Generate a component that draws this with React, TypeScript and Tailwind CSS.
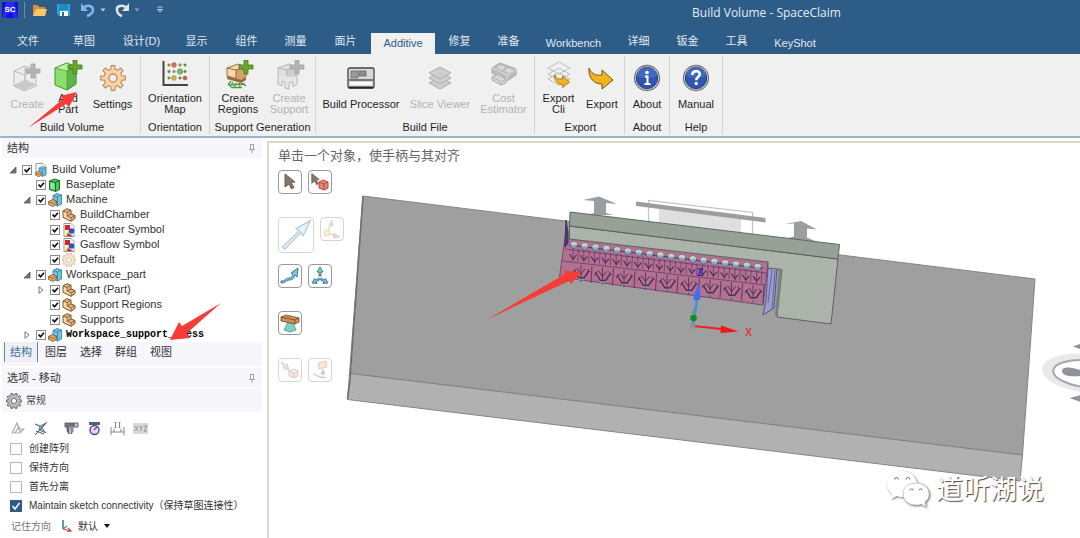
import React, { useState } from 'react';
import clsx from 'clsx';

/* ---------- shared shapes ---------- */

const Plus = ({ x, y, muted }: { x: number; y: number; muted?: boolean }) => (
  <path
    transform={`translate(${x} ${y})`}
    d="M5 0h4v5h5v4H9v5H5V9H0V5h5z"
    fill={muted ? '#b4b4b4' : '#69a82f'}
    stroke={muted ? '#a3a3a3' : '#3f7a1c'}
    strokeWidth="0.8"
  />
);

const GoldArrow = ({ transform }: { transform?: string }) => (
  <path
    transform={transform}
    d="M1 1c2 5 6 8 13 7V3l11 10-11 9v-5C6 17 0 11 1 1z"
    fill="#f0b41c"
    stroke="#7a5210"
    strokeWidth="1"
    strokeLinejoin="round"
  />
);

/* ---------- ribbon icons, 32 x 32 ---------- */

const CreateIcon = () => (
  <>
    <path d="M3 11l11-5 11 4v16l-12 5-10-5z" fill="#ededed" stroke="#b9b9b9" />
    <path d="M3 11l11 4 11-5M14 15v15M14 6v14M3 26l11-6 11 5" fill="none" stroke="#bdbdbd" />
    <path d="M4 26l10-5 10 4-11 5z" fill="#c9c9c9" />
    <Plus x={15} y={4} muted />
  </>
);

const AddPartIcon = () => (
  <>
    <path d="M3 8l12-5 9 4v17l-9 6-12-5z" fill="#8ede6c" stroke="#4a8f37" />
    <path d="M3 8l12-5 9 4-9 4z" fill="#b9f3a0" stroke="#4a8f37" strokeWidth="0.7" />
    <path d="M15 11l9-4v17l-9 6z" fill="#5eb545" stroke="#4a8f37" strokeWidth="0.7" />
    <Plus x={16} y={0} />
  </>
);

const gearPath = (teeth: number, outer: number, inner: number) => {
  const step = (Math.PI * 2) / teeth;
  const pts: string[] = [];
  for (let i = 0; i < teeth; i++) {
    const a = i * step;
    [[-0.3, inner], [-0.19, outer], [0.19, outer], [0.3, inner]].forEach(([o, r]) => {
      pts.push(`${(16 + Math.cos(a + o * step) * r).toFixed(2)} ${(16 + Math.sin(a + o * step) * r).toFixed(2)}`);
    });
  }
  return `M${pts.join('L')}Z`;
};

const SettingsIcon = () => (
  <g transform="translate(0 2)">
    <path d={gearPath(8, 12.5, 9)} fill="#fbd2a4" stroke="#b98a5c" strokeWidth="1.1" strokeLinejoin="round" />
    <circle cx="16" cy="16" r="4" fill="#f0f0f0" stroke="#b98a5c" strokeWidth="1.3" />
  </g>
);

const dots: [number, number, number, string][] = [
  [10, 5, 1.3, '#8a9a3a'], [15, 5, 2.4, '#e06a50'], [21, 5, 1.3, '#a8954a'], [26, 5, 1.3, '#4f9a3d'],
  [10, 11.5, 1.3, '#4f9a3d'], [15, 11.5, 1.3, '#a8954a'], [21, 11.5, 2.8, '#77bd5a'], [26, 11.5, 1.3, '#4f9a3d'],
  [10, 18, 1.3, '#8a9a3a'], [15, 18, 2.4, '#d9b24c'], [21, 18, 1.3, '#4f9a3d'], [26, 18, 2.1, '#d95845'],
];

const OrientationIcon = () => (
  <>
    <path d="M4.500 1v24H29" fill="none" stroke="#444" strokeWidth="2" />
    {dots.map(([cx, cy, r, fill]) => (
      <circle key={`${cx}-${cy}`} cx={cx} cy={cy} r={r} fill={fill} stroke="#6b6b4a" strokeWidth="0.4" />
    ))}
  </>
);

const RegionsIcon = ({ muted }: { muted?: boolean }) => (
  <>
    <path d="M5 8l11-4 8 3v10l-5 3-14-4z" fill={muted ? '#dedede' : '#f6d7af'} stroke={muted ? '#b3b3b3' : '#8b6234'} strokeWidth="0.9" />
    <path d="M14 10l10-3v10l-5 3-5-2z" fill={muted ? '#cdcdcd' : '#d3a36b'} />
    <path d="M5 8l9 2 10-3M14 10v8" fill="none" stroke={muted ? '#b3b3b3' : '#8b6234'} strokeWidth="0.9" />
    {muted ? (
      <path d="M5 16v8l4 2v-5l3 1v6l4 1v-6l4-1v5l4-3v-7" fill="#e6e6e6" stroke="#b3b3b3" strokeWidth="0.9" />
    ) : (
      <>
        <path d="M5 16l14 4 5-3v3l-5 3-14-4z" fill="#9b693a" />
        <path d="M9 21l-3 4m5-3l-3 5m6-4l-2 5m5-5l1 5m2-5l4 3M6 25l17-1M9 27.500h11" stroke="#4a9a43" strokeWidth="1.300" />
      </>
    )}
    <Plus x={17} y={0} muted={muted} />
  </>
);

const ProcessorIcon = () => (
  <>
    <rect x="3" y="8" width="26" height="20" rx="1.500" fill="#d8d8d8" stroke="#444" strokeWidth="1.300" />
    <rect x="6" y="11" width="7" height="7" fill="#9a9a9a" stroke="#666" strokeWidth="0.7" />
    <rect x="14" y="11" width="7" height="5" fill="#8a8a8a" stroke="#666" strokeWidth="0.7" />
    <path d="M4 20h24" stroke="#333" strokeWidth="1.200" />
    <path d="M5 22h22v3H5z" fill="#f8f8f8" />
    <path d="M4 27.500h24" stroke="#222" strokeWidth="2" />
  </>
);

const SliceIcon = () => (
  <>
    {[23, 18, 13].map((y) => (
      <path key={y} d={`M5 ${y}l11 6 11-6-11-6z`} fill="#cfcfcf" stroke="#ababab" />
    ))}
  </>
);

const CostIcon = () => (
  <>
    <path d="M4 8l8-5 16 6v6l-9 6-15-8z" fill="#bdbdbd" stroke="#a8a8a8" />
    <path d="M4 8l15 7 9-6M19 15v6" fill="none" stroke="#dcdcdc" />
    <path d="M4 17l6-3 8 5v4l-5 2-9-5z" fill="#d6d6d6" stroke="#aaa" />
    <path d="M4 17l9 5 5-3M13 22v3" fill="none" stroke="#aaa" strokeWidth="0.8" />
    <ellipse cx="13" cy="7.500" rx="3.500" ry="2" fill="#d9d9d9" />
    <ellipse cx="21" cy="10.500" rx="3.500" ry="2" fill="#d9d9d9" />
  </>
);

const ExportCliIcon = () => (
  <>
    {[19, 14, 8].map((y) => (
      <path key={y} d={`M5 ${y}l11 6 11-6-11-6z`} fill="none" stroke="#a9b5a0" strokeDasharray="2 0.7" />
    ))}
    <GoldArrow transform="translate(11 14) scale(.62)" />
  </>
);

const ExportIcon = () => <GoldArrow transform="translate(2 7)" />;

const RoundIcon = ({ children }: { children: React.ReactNode }) => (
  <g transform="translate(0 2)">
    <circle cx="16" cy="16" r="12.500" fill="#d9d9d9" stroke="#777" strokeWidth="1.300" />
    <circle cx="16" cy="16" r="10.700" fill="#2f55b0" stroke="#213d86" />
    <path d="M6 14a10 9 0 0 1 20 0c-6 3-14 3-20 0z" fill="#5075c9" opacity="0.6" />
    {children}
  </g>
);

const AboutIcon = () => (
  <RoundIcon>
    <circle cx="16" cy="10.500" r="1.800" fill="#fff" />
    <path d="M14 14.500h2.500V22M13.500 22h6" fill="none" stroke="#fff" strokeWidth="2" />
  </RoundIcon>
);

const ManualIcon = () => (
  <RoundIcon>
    <path d="M12.300 13c0-5 7.500-5 7.500-1 0 3-3.600 2.800-3.600 6.200" fill="none" stroke="#fff" strokeWidth="2.600" />
    <circle cx="16.200" cy="21.500" r="1.700" fill="#fff" />
  </RoundIcon>
);

/* ---------- ribbon ---------- */

type Tool = { lines: string[]; icon: React.ReactNode; width: string; muted?: boolean };
type Group = { title: string; box: string; tools: Tool[] };

const groups: Group[] = [
  {
    title: 'Build Volume',
    box: 'w-[141px] pl-1.5 pr-0.5',
    tools: [
      { lines: ['Create'], icon: <CreateIcon />, width: 'w-[42px]', muted: true },
      { lines: ['Add', 'Part'], icon: <AddPartIcon />, width: 'w-[40px]' },
      { lines: ['Settings'], icon: <SettingsIcon />, width: 'w-[49px]' },
    ],
  },
  {
    title: 'Orientation',
    box: 'w-[69px]',
    tools: [{ lines: ['Orientation', 'Map'], icon: <OrientationIcon />, width: 'w-full' }],
  },
  {
    title: 'Support Generation',
    box: 'w-[106px]',
    tools: [
      { lines: ['Create', 'Regions'], icon: <RegionsIcon />, width: 'w-[56px]' },
      { lines: ['Create', 'Support'], icon: <RegionsIcon muted />, width: 'w-[46px]', muted: true },
    ],
  },
  {
    title: 'Build File',
    box: 'w-[219px] px-1.5',
    tools: [
      { lines: ['Build Processor'], icon: <ProcessorIcon />, width: 'w-[78px]' },
      { lines: ['Slice Viewer'], icon: <SliceIcon />, width: 'w-[80px]', muted: true },
      { lines: ['Cost', 'Estimator'], icon: <CostIcon />, width: 'w-[47px]', muted: true },
    ],
  },
  {
    title: 'Export',
    box: 'w-[90px] pl-0.5',
    tools: [
      { lines: ['Export', 'Cli'], icon: <ExportCliIcon />, width: 'w-[43px]' },
      { lines: ['Export'], icon: <ExportIcon />, width: 'w-[44px]' },
    ],
  },
  { title: 'About', box: 'w-[45px]', tools: [{ lines: ['About'], icon: <AboutIcon />, width: 'w-full' }] },
  { title: 'Help', box: 'w-[53px]', tools: [{ lines: ['Manual'], icon: <ManualIcon />, width: 'w-full' }] },
];

const Ribbon = () => (
  <div className="flex border-b-2 border-[#9cb3ca] bg-[#f0f0f0] py-0.5">
    {groups.map((group) => (
      <section key={group.title} className={clsx('flex shrink-0 flex-col border-r border-[#d2d2d2]', group.box)}>
        <div className="flex">
          {group.tools.map((tool) => (
            <button
              key={tool.lines.join(' ')}
              disabled={tool.muted}
              className={clsx('flex shrink-0 flex-col items-center pt-1', tool.width, tool.muted ? 'text-[#b3b3b3]' : 'text-[#1f1f1f]')}
            >
              <svg viewBox="0 0 32 32" className="size-8 shrink-0">
                {tool.icon}
              </svg>
              <span className="flex h-6 flex-col justify-center leading-[11px] whitespace-nowrap">
                {tool.lines.map((line) => (
                  <span key={line}>{line}</span>
                ))}
              </span>
            </button>
          ))}
        </div>
        <h2 className="mt-1 text-center leading-[14px] whitespace-nowrap text-[#1f1f1f]">{group.title}</h2>
      </section>
    ))}
  </div>
);

/* ---------- title bar and tabs ---------- */

const tabs: [string, string][] = [
  ['文件', 'w-[56px]'],
  ['草图', 'w-[56px]'],
  ['设计(D)', 'w-[59px]'],
  ['显示', 'w-[51px]'],
  ['组件', 'w-[49px]'],
  ['测量', 'w-[49px]'],
  ['面片', 'w-[51px]'],
  ['Additive', 'w-[64px]'],
  ['修复', 'w-[49px]'],
  ['准备', 'w-[49px]'],
  ['Workbench', 'w-[81px]'],
  ['详细', 'w-[49px]'],
  ['钣金', 'w-[49px]'],
  ['工具', 'w-[49px]'],
  ['KeyShot', 'w-[68px]'],
];

const Caret = () => (
  <svg viewBox="0 0 6 4" className="h-1 w-1.5">
    <path d="M0.500 0.500h5L3 3.500z" fill="#c3d2e0" />
  </svg>
);

const TitleBar = () => (
  <div className="flex h-[30px] items-start">
    <div className="flex h-5 items-center">
      <svg viewBox="0 0 16 16" className="ml-0.5 size-4">
        <path d="M0 0h16v16H0z" fill="#1212d6" />
        <path d="M0 16L4 0h8l4 16h-4l-2-5H6l-2 5z" fill="#2b2bf0" />
        <text x="8" y="10" textAnchor="middle" fontSize="8" fontWeight="bold" fill="#fff">SC</text>
      </svg>
      <span className="ml-1.5 h-4 w-px bg-[#6b8cab]" />
      <button aria-label="Open" className="ml-[7px]">
        <svg viewBox="0 0 16 16" className="size-4">
          <path d="M1 3h5l1 2h6v8H1z" fill="#d9912f" />
          <path d="M4 7h11l-2 7H1z" fill="#fbc66b" />
        </svg>
      </button>
      <button aria-label="Save" className="ml-2">
        <svg viewBox="0 0 16 16" className="size-4">
          <path d="M1 2h13v12H3l-2-2z" fill="#2ba3df" />
          <path d="M3 2h9v6H3z" fill="#1b8bc9" />
          <path d="M4 9h8v5H4z" fill="#fff" />
          <path d="M6 10h2v4H6z" fill="#2b6f9e" />
        </svg>
      </button>
      <button aria-label="Undo" className="ml-2">
        <svg viewBox="0 0 16 16" className="size-4">
          <path d="M3 6c5-4 10-2 10 2 0 3-3 5-6 6" fill="none" stroke="#7fb6ee" strokeWidth="2.500" />
          <path d="M1 1v8h7z" fill="#7fb6ee" />
        </svg>
      </button>
      <span className="ml-1"><Caret /></span>
      <button aria-label="Redo" className="ml-2">
        <svg viewBox="0 0 16 16" className="size-4">
          <path d="M13 6C8 2 2 4 3 8c0 3 2 5 5 6" fill="none" stroke="#dfe4e8" strokeWidth="2.500" />
          <path d="M15 1v8H8z" fill="#dfe4e8" />
        </svg>
      </button>
      <span className="ml-1 opacity-60"><Caret /></span>
      <button aria-label="Customize" className="ml-4">
        <svg viewBox="0 0 8 8" className="size-2">
          <path d="M1.500 1h5M1.500 3.500h5L4 6z" fill="none" stroke="#c3d2e0" />
        </svg>
      </button>
    </div>
    <h1 className="flex-1 pt-1 pl-[289px] text-center font-['Open_Sans','Noto_Sans',sans-serif] text-xs leading-[18px] text-[#e4ecf4]">
      Build Volume - SpaceClaim
    </h1>
  </div>
);

const TabBar = ({ active, onSelect }: { active: string; onSelect: (tab: string) => void }) => (
  <nav className="flex h-6 items-end">
    {tabs.map(([label, width]) => (
      <button
        key={label}
        onClick={() => onSelect(label)}
        className={clsx(
          'h-[21px] shrink-0 text-center whitespace-nowrap',
          width,
          active === label ? 'bg-[#f0f0f0] text-[#2d5c87]' : 'text-[#e1eaf2]',
          /^[A-Z]/.test(label) ? '' : 'pb-1',
        )}
      >
        {label}
      </button>
    ))}
  </nav>
);

/* ---------- structure tree ---------- */

const BoxesIcon = () => (
  <>
    <path d="M5 2.500l4-2 4.500 1.500v9L9.500 13 5 11z" fill="#6fc3e3" stroke="#2f7796" strokeWidth="0.8" />
    <path d="M5 2.500L9.500 4l4-2M9.500 4v9" fill="none" stroke="#2f7796" strokeWidth="0.7" />
    <path d="M0.500 8.500l4-2 4 1.500v3L5 13.500l-4.500-2z" fill="#dba86a" stroke="#83582b" strokeWidth="0.8" />
    <path d="M0.500 8.500L5 10.500l3.500-2" fill="none" stroke="#83582b" strokeWidth="0.7" />
  </>
);

const DocIcon = () => (
  <>
    <path d="M2 0.500h7l3 3V12H2z" fill="#fdfdfd" stroke="#7c93a8" strokeWidth="0.9" />
    <g transform="translate(1 3) scale(.8)"><BoxesIcon /></g>
  </>
);

const BaseplateIcon = () => (
  <>
    <path d="M1.500 3l5-2 5 1.500v9l-4 2-6-2z" fill="#4fc35c" stroke="#1b6a2a" />
    <path d="M1.500 3l6 1.500 4-2M7.500 4.500v9" fill="none" stroke="#1b6a2a" />
    <path d="M2.500 4.500l4 1v6l-4-1z" fill="#8fe39a" />
  </>
);

const PartIcon = () => (
  <>
    <path d="M1 3l4-2.300 4 1.500V6l4 1.500v3L9 13.300l-8-4z" fill="#e3b47b" stroke="#7b4f25" strokeLinejoin="round" />
    <path d="M1 3l4 1.500 4-2.300M5 4.500V8l4 2 4-2.500M9 10v3.300M5 8l4-2" fill="none" stroke="#7b4f25" strokeWidth="0.8" />
    <path d="M1.700 4l2.800 1v3.400l4 2v1.800l-6.800-3.400z" fill="#f6d9ae" />
  </>
);

const SymbolIcon = () => (
  <>
    <path d="M2 0.500h7l3 3v10H2z" fill="#fff" stroke="#8b8b8b" strokeWidth="0.9" />
    <path d="M3 2h5v5H3z" fill="#e02020" />
    <circle cx="9.500" cy="8" r="2.800" fill="#2a52cf" />
    <path d="M3 13l3-5.500L9 13z" fill="#f3cf2d" />
    <path d="M6 10l5 3H5z" fill="#cf2a2a" />
  </>
);

const SmallGearIcon = ({ fill, stroke }: { fill: string; stroke: string }) => (
  <g transform="translate(-.4 -.4) scale(.46)">
    <path d={gearPath(10, 15, 11.5)} fill={fill} stroke={stroke} strokeWidth="1.600" />
    <circle cx="16" cy="16" r="5" fill="#fff" stroke={stroke} strokeWidth="1.600" />
  </g>
);

type Row = { label: string; indent: string; icon: React.ReactNode; arrow?: 'open' | 'closed'; bold?: boolean };

const rows: Row[] = [
  { label: 'Build Volume*', indent: 'pl-[9px]', icon: <DocIcon />, arrow: 'open' },
  { label: 'Baseplate', indent: 'pl-[23px]', icon: <BaseplateIcon /> },
  { label: 'Machine', indent: 'pl-[23px]', icon: <BoxesIcon />, arrow: 'open' },
  { label: 'BuildChamber', indent: 'pl-[37px]', icon: <PartIcon /> },
  { label: 'Recoater Symbol', indent: 'pl-[37px]', icon: <SymbolIcon /> },
  { label: 'Gasflow Symbol', indent: 'pl-[37px]', icon: <SymbolIcon /> },
  { label: 'Default', indent: 'pl-[37px]', icon: <SmallGearIcon fill="#f8e6d0" stroke="#cdb398" /> },
  { label: 'Workspace_part', indent: 'pl-[23px]', icon: <BoxesIcon />, arrow: 'open' },
  { label: 'Part (Part)', indent: 'pl-[37px]', icon: <PartIcon />, arrow: 'closed' },
  { label: 'Support Regions', indent: 'pl-[37px]', icon: <PartIcon /> },
  { label: 'Supports', indent: 'pl-[37px]', icon: <PartIcon /> },
  { label: 'Workspace_support__less', indent: 'pl-[23px]', icon: <BoxesIcon />, arrow: 'closed', bold: true },
];

const TreeRow = ({ row }: { row: Row }) => (
  <li className={clsx('flex h-[15px] items-center', row.indent)}>
    <span className="flex w-[13px] shrink-0">
      {row.arrow && (
        <button aria-label="Toggle">
          <svg viewBox="0 0 8 8" className="size-2">
            {row.arrow === 'open' ? (
              <path d="M7 1v6H1z" fill="#777" stroke="#555" strokeWidth="0.8" />
            ) : (
              <path d="M2 0.700L6 4 2 7.300z" fill="#fff" stroke="#777" />
            )}
          </svg>
        </button>
      )}
    </span>
    <label className="flex items-center">
      <span className="relative flex">
        <input type="checkbox" defaultChecked className="peer size-2.5 appearance-none border border-[#8d8d8d] bg-white" />
        <svg viewBox="0 0 10 10" className="pointer-events-none invisible absolute inset-0 size-2.5 peer-checked:visible">
          <path d="M2.500 4.500l2 2.200 3.500-4" fill="none" stroke="#111" strokeWidth="1.700" />
        </svg>
      </span>
      <svg viewBox="0 0 14 14" className="ml-0.5 size-3.5">{row.icon}</svg>
      <span
        className={clsx(
          'ml-1 whitespace-nowrap',
          row.bold ? "font-['Liberation_Mono',monospace] text-[10px] font-bold text-black" : 'text-[#333]',
        )}
      >
        {row.label}
      </span>
    </label>
  </li>
);

const Pin = () => (
  <svg viewBox="0 0 8 10" className="h-2.5 w-2">
    <path d="M2.500 1v5M5.500 1v5M2.500 1.500h3M1 6.500h6M4 6.500V10" fill="none" stroke="#a3a3ab" />
  </svg>
);

const PanelHeader = ({ title }: { title: string }) => (
  <div className="flex h-5 items-center justify-between bg-[#f6f6fb] pr-1.5 pl-[5px]">
    <h2 className="text-[#333]">{title}</h2>
    <button aria-label="Pin"><Pin /></button>
  </div>
);

const panelTabs = ['结构', '图层', '选择', '群组', '视图'];

const StructurePanel = () => {
  const [tab, setTab] = useState('结构');

  return (
    <section>
      <PanelHeader title="结构" />
      <ul className="-ml-0.5 pt-1">
        {rows.map((row) => (
          <TreeRow key={row.label} row={row} />
        ))}
      </ul>
      <div className="flex h-6 gap-px bg-[#f6f6fb] pl-0.5">
        {panelTabs.map((name) => (
          <button
            key={name}
            onClick={() => setTab(name)}
            className={clsx(
              'h-5 w-[34px]',
              tab === name ? 'border-x border-[#5f8bb0] bg-[#f0f0f4] text-[#3f6f99]' : 'text-[#333]',
            )}
          >
            {name}
          </button>
        ))}
      </div>
    </section>
  );
};

/* ---------- options panel ---------- */

const moveTools: [string, string, React.ReactNode][] = [
  ['Plane', '', <path d="M2 12l5-10 2 6M2 12h8l4-4H8M5 12l4-6 1 5" fill="none" stroke="#aaa" strokeWidth="1.200" />],
  [
    'Align', 'ml-2',
    <>
      <path d="M2 3l5 2-1 4 7 3-4-5 4-5-6 3z" fill="#8fb6d1" stroke="#456" strokeWidth="0.7" />
      <path d="M2 14L14 1M3 10l8 3" stroke="#555" />
    </>,
  ],
  [
    'Caliper', 'ml-4',
    <>
      <path d="M1 2h9v3H8v3H7V5H5v8L3 10V6H1z" fill="#777" stroke="#444" strokeWidth="0.7" />
      <path d="M7 5v8l2-3V5M10 2h4v4h-4z" fill="#bcc6dd" stroke="#556" strokeWidth="0.9" />
    </>,
  ],
  [
    'Protractor', 'ml-2',
    <>
      <path d="M2 1h11v3H2z" fill="#555e7a" />
      <circle cx="7.500" cy="9" r="4.500" fill="#dcd9f2" stroke="#4b4f92" strokeWidth="1.400" />
      <path d="M7 9l3-3" stroke="#d23" strokeWidth="1.200" />
    </>,
  ],
  ['Ruler', 'ml-2', <path d="M1 6v8M14 6v8M1 11h13M4 8v3M11 8v3M5.500 1.500v5M9.500 1.500v5M4.500 1.500h2M8.500 1.500h2M4.500 6.500h2M8.500 6.500h2" fill="none" stroke="#888" />],
  [
    'XYZ', 'ml-2',
    <>
      <path d="M0 2h15v11H0z" fill="#d9d9d9" />
      <path d="M2 5l3 5M5 5l-3 5M6.500 5L8 7.500 9.500 5M8 7.500V10M11 5h3l-3 5h3" fill="none" stroke="#8f8f8f" strokeWidth="0.9" />
    </>,
  ],
];

const options: [string, boolean][] = [
  ['创建阵列', false],
  ['保持方向', false],
  ['首先分离', false],
  ['Maintain sketch connectivity（保持草图连接性）', true],
];

const OptionsPanel = () => (
  <section className="mt-0.5 text-[10px]">
    <div className="text-[11px]"><PanelHeader title="选项 - 移动" /></div>
    <h3 className="mt-px flex h-[23px] items-center bg-[#f6f6fb] pl-1 text-[#444]">
      <svg viewBox="0 0 14 14" className="mr-1 size-4"><SmallGearIcon fill="#bbb" stroke="#5c5c5c" /></svg>
      常规
    </h3>
    <div className="flex items-center pt-[9px] pl-2">
      {moveTools.map(([name, gap, art]) => (
        <button key={name} aria-label={name} className={gap}>
          <svg viewBox="0 0 15 15" className="size-[15px]">{art}</svg>
        </button>
      ))}
    </div>
    <div className="pt-[3px] pl-2">
      {options.map(([label, checked]) => (
        <label key={label} className="flex h-[19px] items-center gap-[7px] whitespace-nowrap text-[#333]">
          <span className="relative flex">
            <input
              type="checkbox"
              defaultChecked={checked}
              className="peer size-3 appearance-none border border-[#b5b5b5] bg-white checked:border-[#2d5c87] checked:bg-[#2d5c87]"
            />
            <svg viewBox="0 0 12 12" className="pointer-events-none invisible absolute inset-0 size-3 peer-checked:visible">
              <path d="M2.500 6l2.500 3 4.500-6" fill="none" stroke="#fff" strokeWidth="1.500" />
            </svg>
          </span>
          {label}
        </label>
      ))}
    </div>
    <div className="flex h-[22px] items-center pl-[9px]">
      <label htmlFor="direction" className="text-[#777]">记住方向</label>
      <svg viewBox="0 0 12 12" className="ml-2.5 size-3">
        <path d="M2 0v9" stroke="#3a72a8" strokeWidth="1.500" />
        <path d="M2 9l4-3" stroke="#4fa04f" strokeWidth="1.500" />
        <path d="M2 9l8 2M7 8l3 3-4 1" fill="none" stroke="#c94a4a" strokeWidth="1.200" />
      </svg>
      <span className="relative ml-[5px] flex items-center">
        <select id="direction" className="appearance-none bg-transparent pr-3 text-[#333]">
          <option>默认</option>
        </select>
        <svg viewBox="0 0 6 4" className="pointer-events-none absolute right-0 h-1 w-1.5">
          <path d="M0 0h6L3 4z" fill="#111" />
        </svg>
      </span>
    </div>
  </section>
);

/* ---------- 3D view ---------- */

const bigTrees = Array.from({ length: 9 }, (_, i) => ({ x: 581 + i * 21.5, y: 273 + i * 2.5 }));
const smallTrees = Array.from({ length: 18 }, (_, i) => ({ x: 573 + i * 10.8, y: 256 + i * 1.3 }));
const beads = Array.from({ length: 18 }, (_, i) => ({ x: 574 + i * 10.8, y: 245 + i * 1.3 }));

const Scene = () => (
  <svg viewBox="269 143 811 395" preserveAspectRatio="xMinYMin slice" className="absolute inset-0 size-full">
    {/* base plate */}
    <path d="M363 196L1035 279 1022.500 455 351 373.500z" fill="#9f9f9f" />
    <path d="M351 373.500L1022.500 455 1020 481 347.500 399.500z" fill="#b1b1b1" />
    <path d="M363 196L1035 279 1022.500 455 1020 481 347.500 399.500z" fill="none" stroke="#858585" />
    <path d="M351 373.500L1022.500 455" stroke="#7c7c7c" />
    <path d="M363 196L350 380 347.500 399" fill="none" stroke="#6f6f6f" strokeWidth="1.600" />

    {/* recoater and gas flow markers */}
    <path d="M659 209l82 10v18l-82-10z" fill="#dfdfdf" />
    <path d="M648.500 222v-21.500l104 12V234" fill="none" stroke="#c0c2c4" strokeWidth="1.200" />
    <path d="M636 201.500l129.500 16.500v4.500L636 206z" fill="#9a9ea1" />
    <path d="M583 200l16-3.500 18 7.500-11-1v10l7 2h-25l6-2v-12z" fill="#9a9ea1" />
    <path d="M785 224l16-3 16 8.500-10-1v9l9 4-29-3 7-2v-13z" fill="#9a9ea1" />

    {/* lattice supports */}
    <path d="M565 238l203 24-5 43-203.500-28z" fill="#b2728f" />
    <path d="M565 238l-5.500 39 203.500 28 5-43M562.500 261l203 24M565 249l202 24" fill="none" stroke="#70406e" strokeWidth="0.900" />
    {bigTrees.map(({ x, y }) => (
      <g key={x} transform={`translate(${x} ${y})`} fill="none" stroke="#4d2858">
        <path d="M0 9V-8M11-7L10 10" strokeWidth="0.800" />
        <path d="M-7-3L-2 5h5L8-2" strokeWidth="1.300" />
        <path d="M-4-5L0 1 4-4M-8 0l3-4M6-4l3 3" strokeWidth="0.900" />
        <path d="M-3 6.500h6" stroke="#7f9a94" strokeWidth="1.500" />
      </g>
    ))}
    {smallTrees.map(({ x, y }) => (
      <g key={x} transform={`translate(${x} ${y})`} fill="none" stroke="#4d2858">
        <path d="M0 5v-12M5.400-7l-.6 12" strokeWidth="0.600" />
        <path d="M-3.500-2L0 3l3.500-4" strokeWidth="1.100" />
      </g>
    ))}
    <path d="M565 240l1-20 2 12v11l-3 4z" fill="#51406f" stroke="#29235c" strokeWidth="0.800" />
    <path d="M768 268h9l-3 40-11 7 3-16z" fill="#9c9dcb" stroke="#4c4b8a" strokeWidth="0.900" />
    <path d="M772 269l-4 34M775 270l-3 40" stroke="#5656a0" strokeWidth="0.800" />

    {/* printed part */}
    <path d="M569.500 226L838 259l-7 65-54-7 5-47.500-14-1.500v-6L569.500 239z" fill="#abb3ab" stroke="#545c54" strokeWidth="0.900" />
    <path d="M782 269.500l-3-1-4 47 2 1.500z" fill="#7b837b" />
    <path d="M570 212l269.500 32.500L838 259 569.500 226z" fill="#98a198" stroke="#545c54" strokeWidth="0.900" />
    {beads.map(({ x, y }) => (
      <g key={x}>
        <path d={`M${x - 5} ${y}l10 1.200`} stroke="#333" strokeWidth="1.200" />
        <circle cx={x} cy={y} r="3.500" fill="#8ba0c8" stroke="#4a5264" strokeWidth="0.600" />
        <path d={`M${x - 3.3} ${y}a3.300 3.300 0 0 1 6.600 0z`} fill="#c3d0c4" />
      </g>
    ))}

    {/* move handle */}
    <path d="M693 325l4-26" stroke="#4a8be0" strokeWidth="2.600" />
    <path d="M699 282l1.500 17-3.500 1.500-4-1.500z" fill="#3f6df0" />
    <path d="M693 326l29 3" stroke="#f02020" strokeWidth="1.800" />
    <path d="M721 325.500l17.500 6-18 1.500z" fill="#f51515" />
    <path d="M690.500 313l2.500-3 3 3z" fill="#4caf50" />
    <circle cx="693.500" cy="318" r="3.300" fill="#118a2a" />
    <circle cx="692.800" cy="326" r="2.600" fill="#8a9398" />
    <text x="700" y="276" textAnchor="middle" fontSize="10" fontWeight="bold" fill="#2525c8">Z</text>
    <text x="748.500" y="336" textAnchor="middle" fontSize="10" fontWeight="bold" fill="#e33535">X</text>

    {/* rotation disc at the right edge */}
    <ellipse cx="1085" cy="373" rx="43" ry="19" transform="rotate(6 1085 373)" fill="#e9e9e9" />
    <ellipse cx="1088" cy="374" rx="35" ry="13.500" transform="rotate(6 1088 374)" fill="#fff" stroke="#a3a6ab" strokeWidth="2" />
    <path d="M1062 371c0-5 10-4 18-1v6c-8 1-18 0-18-5z" fill="#8f9397" />
    <path d="M1073 346.500l7-2.500v5zM1069.500 398l11-3v7z" fill="#8f9397" />

    {/* callout arrow */}
    <path d="M488 319L565 274l-1-3 17 1-10 12-2-3z" fill="#f53c36" />
  </svg>
);

const ToolButton = ({ label, big, faded, children }: { label: string; big?: boolean; faded?: boolean; children: React.ReactNode }) => (
  <button
    aria-label={label}
    className={clsx(
      'flex items-center justify-center rounded border border-[#999] bg-white',
      big ? 'size-9' : 'size-6',
      faded && 'opacity-40',
    )}
  >
    <svg viewBox="0 0 20 20" className={big ? 'size-8' : 'size-5'}>{children}</svg>
  </button>
);

const Cursor = ({ transform }: { transform?: string }) => (
  <path transform={transform} d="M5 2l10 8-4 .5 3 5-2.500 1.500-2.500-5-4 3z" fill="#85796c" stroke="#4f4740" strokeWidth="0.800" />
);

const ToolPalette = () => (
  <div className="relative flex flex-col items-start pt-1.5 pl-[9px]">
    <p className="text-[13px] leading-[14px] text-[#666]">单击一个对象，使手柄与其对齐</p>
    <div className="mt-[7px] flex gap-1.5">
      <ToolButton label="Select"><Cursor /></ToolButton>
      <ToolButton label="Select Component">
        <Cursor transform="translate(-2 0) scale(.75)" />
        <path d="M9 10l4-2 5 2v6l-4 2-5-2z" fill="#c99478" stroke="#e03a3a" />
        <path d="M9 10l5 2 4-2M14 12v6" fill="none" stroke="#e03a3a" />
      </ToolButton>
    </div>
    <div className="mt-[23px] flex items-start gap-1.5">
      <ToolButton label="Direction" big faded>
        <path d="M1.500 17.500L12 7.500l-2-1.500 9-5-4.500 9.500-1.500-2L3 18.800z" fill="#c0e4f3" stroke="#4f7f98" strokeWidth="0.800" />
      </ToolButton>
      <ToolButton label="Anchor" faded>
        <path d="M5 14L9 5M5 14l9 2.500" stroke="#888" />
        <path d="M7 6l3-5 1 6z" fill="#8fc79a" stroke="#5ea36c" strokeWidth="0.600" />
        <path d="M12 14l6 4-7 1z" fill="#e58a8a" stroke="#b96363" strokeWidth="0.600" />
        <circle cx="5" cy="14" r="3" fill="#f5ec6a" stroke="#b5a422" />
      </ToolButton>
    </div>
    <div className="mt-[11px] flex gap-1.5">
      <ToolButton label="Along Trajectory">
        <path d="M1 15c5 0 4-3 8-3 3 0 3-2 4-4l-2-1 7-5-1 9-2-2c-1 3-2 5-6 5-4 1-3 3-8 3z" fill="#7fc6e3" stroke="#23627f" strokeWidth="0.800" />
      </ToolButton>
      <ToolButton label="Radiate">
        <path d="M9 10V6H7l3-5 3 5h-2v4z" fill="#7fc6e3" stroke="#23627f" strokeWidth="0.800" />
        <path d="M9 12l-3.500 2-1-1.500L2 17l5 .500-1-1.700L9.500 14zM11 12l3.500 2 1-1.500L18 17l-5 .500 1-1.700L10.500 14z" fill="#7fc6e3" stroke="#23627f" strokeWidth="0.800" />
      </ToolButton>
    </div>
    <div className="mt-[23px] flex">
      <ToolButton label="Fulcrum">
        <path d="M8 9h5l3 8-6 2-6-2z" fill="#7fd0c4" stroke="#3d8b82" strokeWidth="0.700" />
        <path d="M1 4l5-2 13 3v4l-4 2L1 8z" fill="#d08e58" stroke="#70431e" strokeWidth="0.800" />
        <path d="M1 4l14 3 4-2M15 7v4" fill="none" stroke="#70431e" strokeWidth="0.800" />
      </ToolButton>
    </div>
    <div className="mt-[23px] flex gap-1.5">
      <ToolButton label="Up To" faded>
        <path d="M2 2l3 3 2-1 2 6-6-2 1-2-3-3z" fill="#9fc9de" stroke="#5c8397" strokeWidth="0.800" />
        <path d="M9 11l4-2 5 2v5l-4 2-5-2zM9 11l5 2 4-2M14 13v5" fill="#eec2a5" stroke="#9b7560" strokeWidth="0.800" />
      </ToolButton>
      <ToolButton label="Orient" faded>
        <path d="M8 3l8-2 1 6-8 2z" fill="#eec2a5" stroke="#9b7560" strokeWidth="0.800" />
        <path d="M13 9v6M13 10l-2 4h4zM3 14l9 4 4-1" stroke="#5c8397" fill="#9fc9de" />
      </ToolButton>
    </div>
  </div>
);

const Watermark = () => (
  <div className="absolute right-9 bottom-7 flex items-center gap-1.5 text-white">
    <svg viewBox="0 0 44 40" className="h-10 w-11 drop-shadow-[1px_1px_1px_#777]">
      <path d="M16 1C7 1 1 7 1 14c0 4 2 7 5 10l-1 5 6-3c2 1 4 1 6 1-1-8 5-14 14-14C30 6 24 1 16 1z" fill="#fff" />
      <path d="M30 13c-8 0-13 5-13 11s5 11 13 11c2 0 4 0 5-1l5 3-1-5c3-2 4-5 4-8 0-6-5-11-13-11z" fill="#fff" stroke="#aaa" strokeWidth="0.500" />
      <path d="M8.500 9.500a2 2 0 0 1 4 0M20 9.500a2 2 0 0 1 4 0M24 20.500a1.700 1.700 0 0 1 3.400 0M33 20.500a1.700 1.700 0 0 1 3.400 0" fill="none" stroke="#777" />
    </svg>
    <span className="text-[27px] leading-9 [text-shadow:1px_1px_1px_#444]">道听湖说</span>
  </div>
);

const Callout = ({ className, d }: { className: string; d: string }) => (
  <svg viewBox="0 0 52 38" className={clsx('pointer-events-none absolute h-[38px] w-[52px]', className)}>
    <path d={d} fill="#f53c36" />
  </svg>
);

const App = () => {
  const [activeTab, setActiveTab] = useState('Additive');

  return (
    <div className="relative flex min-h-screen flex-col overflow-hidden bg-white font-['Liberation_Sans','Noto_Sans_CJK_SC',sans-serif] text-[11px] leading-[15px]">
      <header className="bg-[#2d5c87]">
        <TitleBar />
        <TabBar active={activeTab} onSelect={setActiveTab} />
      </header>
      <Ribbon />
      <div className="flex flex-1">
        <aside className="ml-0.5 w-[260px] shrink-0">
          <StructurePanel />
          <OptionsPanel />
        </aside>
        <main className="relative mt-[3px] ml-[5px] flex-1 overflow-hidden border-t-2 border-l-2 border-[#dedac8]">
          <Scene />
          <ToolPalette />
          <Watermark />
        </main>
      </div>
      <Callout className="top-[91px] left-[27px]" d="M1 37L36 8l-3-3 17-4-8 15-3-3z" />
      <Callout className="top-[302px] left-[169px]" d="M52 1L18 31l3 5-20 2 9-18 3 4z" />
    </div>
  );
};

export default App;
